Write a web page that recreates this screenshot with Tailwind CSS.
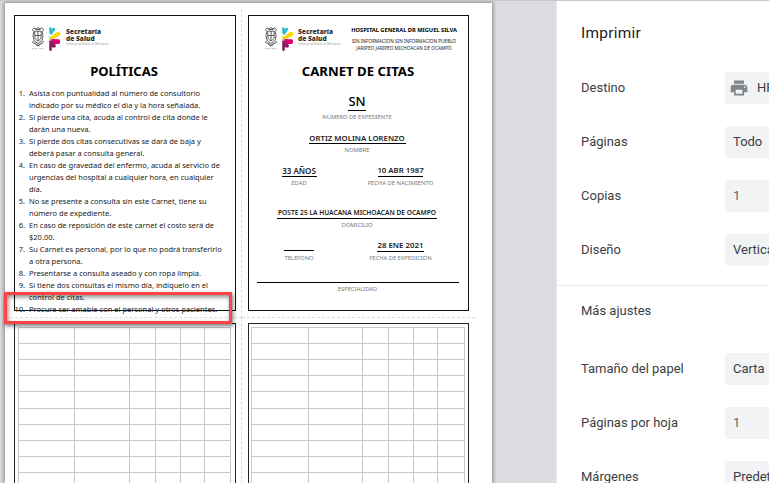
<!DOCTYPE html>
<html lang="es">
<head>
<meta charset="utf-8">
<title>Imprimir</title>
<script src="https://cdn.jsdelivr.net/npm/@tailwindcss/browser@4"></script>
</head>
<body class="w-[769px] h-[483px] overflow-hidden bg-[#dadce0] font-['Noto_Sans','Open_Sans',sans-serif]">
<svg class="hidden">
  <symbol id="logo" viewBox="0 0 30 28">
    <g fill="none" stroke="#4a4a4a" stroke-width=".9">
      <path d="M1.500 3.500 3 1.800 5 3l2-1.500L9 3l2-1.200 1.500 1.700-1.300 2 .8 4-1 5-4 3-4-3-1-5 .8-4z"/>
      <path d="M3.800 5.200h6.400v5.500c0 2-1.500 3.300-3.200 4.200-1.700-.9-3.200-2.200-3.200-4.200zM7 5.200v9.300M4 9.500h6"/>
      <path d="M2 15c-1 2 1 3 2 2l3 2.500 3-2.500c1 1 3 0 2-2M4.500 18.500 7 20l2.500-1.500M4.500 3.500h5"/>
    </g>
    <path d="M1 22.700h5M7.500 22.700h5" stroke="#aaa" stroke-width=".9" stroke-dasharray="1 .4"/>
    <path d="M18.200 2C18.300.6 20 .6 20.300 1.800L20.700 3 22 2c1.300-.6 2.500.5 1.900 1.900L20.500 9 18.200 7z" fill="#2fbcc6"/>
    <path d="M19.500 11 25.500 6.200c1.300-.9 2.900-.6 3.500.6.700 1.300.2 2.600-1 3.200L22 13z" fill="#fcd900"/>
    <path d="M18.200 9.500 21.500 12.700 18.200 15z" fill="#c5d93a"/>
    <path d="M20 13 27.500 13.300c2.200.4 2.200 4.400-.2 4.700L23 18z" fill="#e0006f"/>
    <path d="M18.200 15 20.500 14 24.700 19c.9 1.700-1 3.300-2.500 2.500L21 21l-.3 3c-.4 1.700-2.300 1.500-2.500-.2z" fill="#8c1d63"/>
  </symbol>
</svg>
<div class="flex w-[769px] h-[483px] overflow-hidden border-t border-[#c8c8c8]">
  <main class="w-[556px] shrink-0 h-[482px] overflow-hidden pl-[5px] pt-[2px]">
    <div class="relative w-[487px] h-[480px] bg-white shadow-[0_0_4px_1px_#85858a]">
      <div class="grid grid-cols-[237px_233px] grid-rows-[309px_171px] pt-[6px] h-[480px] overflow-hidden">

        <section class="border-r border-b border-dashed border-[#dcdcdc] pl-[9px] pt-[6px]">
          <div class="w-[222px] h-[296px] border border-[#111]">
            <div class="flex h-[44px] pt-[10px] pl-[16px]">
              <svg class="w-[30px] h-[28px]"><use href="#logo"/></svg>
              <div class="ml-[5px] mt-[3px] text-[#333] whitespace-nowrap">
                <div class="text-[6.600px] leading-[6.500px] font-black font-['Open_Sans']">Secretaría<br>de Salud</div>
                <div class="text-[2.600px] leading-[5px] text-[#999]">Gobierno del Estado de Michoacán</div>
              </div>
            </div>
            <h1 class="h-[27px] leading-[23px] text-center text-[13px] font-bold text-black pr-[2px]">POLÍTICAS</h1>
            <ol class="text-[7.520px] leading-[12px] text-[#222] whitespace-nowrap [&>li]:flex [&>li>b]:w-[10px] [&>li>b]:mr-[4px] [&>li>b]:font-normal [&>li>b]:flex [&>li>b]:justify-end">
              <li><b>1.</b><p>Asista con puntualidad al número de consultorio<br>indicado por su médico el día y la hora señalada.</p></li>
              <li><b>2.</b><p>Si pierde una cita, acuda al control de cita donde le<br>darán una nueva.</p></li>
              <li><b>3.</b><p>Si pierde dos citas consecutivas se dará de baja y<br>deberá pasar a consulta general.</p></li>
              <li><b>4.</b><p>En caso de gravedad del enfermo, acuda al servicio de<br>urgencias del hospital a cualquier hora, en cualquier<br>día.</p></li>
              <li><b>5.</b><p>No se presente a consulta sin este Carnet, tiene su<br>número de expediente.</p></li>
              <li><b>6.</b><p>En caso de reposición de este carnet el costo será de<br>$20.00.</p></li>
              <li><b>7.</b><p>Su Carnet es personal, por lo que no podrá transferirlo<br>a otra persona.</p></li>
              <li><b>8.</b><p>Presentarse a consulta aseado y con ropa limpia.</p></li>
              <li><b>9.</b><p>Si tiene dos consultas el mismo día, indíquelo en el<br>control de citas.</p></li>
              <li><b>10.</b><p>Procure ser amable con el personal y otros pacientes.</p></li>
            </ol>
          </div>
        </section>

        <section class="border-b border-dashed border-[#dcdcdc] pl-[6px] pt-[6px]">
          <div class="w-[221px] h-[296px] border border-[#111] text-center whitespace-nowrap text-[#222]">
            <div class="flex h-[44px] pt-[10px] pl-[15px]">
              <svg class="w-[30px] h-[28px]"><use href="#logo"/></svg>
              <div class="ml-[4px] mt-[3px] w-[43px] text-left text-[#333]">
                <div class="text-[6.600px] leading-[6.500px] font-black font-['Open_Sans']">Secretaría<br>de Salud</div>
                <div class="text-[2.600px] leading-[5px] text-[#999]">Gobierno del Estado de Michoacán</div>
              </div>
              <div class="w-[126px]">
                <div class="text-[5.700px] leading-[8px] font-bold text-black">HOSPITAL GENERAL DR MIGUEL SILVA</div>
                <div class="mt-[4px] text-[4.700px] leading-[7px]">SIN INFORMACION SIN INFORMACION PUEBLO<br>JARIPEO JARIPEO MICHOACAN DE OCAMPO</div>
              </div>
            </div>
            <h1 class="h-[31px] leading-[23px] text-[13.200px] font-bold text-black pr-[1px]">CARNET DE CITAS</h1>
            <div class="pr-[3px] flex flex-col items-center">
              <div class="w-[18px] h-[20px] border-b border-black flex justify-center text-[13px] leading-[20px] font-medium text-black">SN</div>
              <div class="h-[20px] text-[5.800px] leading-[13px] text-[#777]">NÚMERO DE EXPEDIENTE</div>
              <div class="w-[97px] h-[13px] border-b border-black flex justify-center text-[7.800px] leading-[15px] font-semibold">ORTIZ MOLINA LORENZO</div>
              <div class="h-[20px] text-[5.800px] leading-[12px] text-[#777]">NOMBRE</div>
            </div>
            <div class="grid grid-cols-[100px_103px]">
              <div class="flex flex-col items-center">
                <div class="w-[35px] h-[13px] border-b border-black flex justify-center text-[8px] leading-[13px] font-semibold">33 AÑOS</div>
                <div class="h-[29px] text-[5.800px] leading-[12px] text-[#777]">EDAD</div>
              </div>
              <div class="flex flex-col items-center">
                <div class="w-[45px] h-[13px] border-b border-black flex justify-center text-[7.800px] leading-[13px] font-semibold">10 ABR 1987</div>
                <div class="h-[29px] text-[5.900px] leading-[12px] text-[#777]">FECHA DE NACIMIENTO</div>
              </div>
            </div>
            <div class="pr-[3px] flex flex-col items-center">
              <div class="w-[160px] h-[13px] border-b border-black flex justify-center text-[6.640px] leading-[14px] font-semibold">POSTE 25 LA HUACANA MICHOACAN DE OCAMPO</div>
              <div class="h-[20px] text-[5.800px] leading-[12px] text-[#777]">DOMICILIO</div>
            </div>
            <div class="grid grid-cols-[100px_103px]">
              <div class="flex flex-col items-center">
                <div class="w-[30px] h-[12px] border-b border-black"></div>
                <div class="text-[5.800px] leading-[14px] text-[#777]">TELÉFONO</div>
              </div>
              <div class="flex flex-col items-center">
                <div class="w-[47px] h-[13px] border-b border-black flex justify-center text-[7.900px] leading-[13px] font-semibold">28 ENE 2021</div>
                <div class="h-[18px] text-[5.800px] leading-[12px] text-[#777]">FECHA DE EXPEDICIÓN</div>
              </div>
            </div>
            <div class="pr-[1px] flex flex-col items-center">
              <div class="w-[202px] h-[13px] border-b border-black"></div>
              <div class="pr-px text-[5.800px] leading-[13px] text-[#777]">ESPECIALIDAD</div>
            </div>
          </div>
        </section>

        <section class="border-r border-dashed border-[#dcdcdc] pl-[9px] pt-[5px] overflow-hidden">
          <div class="w-[222px] h-[166px] overflow-hidden border border-b-0 border-[#222] pl-[3px] pt-[3px]">
            <div id="left-table" class="grid grid-cols-[56px_55px_26px_25px_24px_26px] w-[213px] border-l border-t border-[#c8c8c8]"></div>
          </div>
        </section>
        <section class="pl-[6px] pt-[5px] overflow-hidden">
          <div class="w-[221px] h-[166px] overflow-hidden border border-b-0 border-[#222] pl-[2px] pt-[3px]">
            <div id="right-table" class="grid grid-cols-[57px_54px_26px_25px_24px_27px] w-[214px] border-l border-t border-[#c8c8c8]"></div>
          </div>
        </section>
      </div>
      <div class="absolute left-[-1px] top-[289px] w-[228px] h-[32px] border-[3px] border-[#fb4444] shadow-[1px_2px_4px_#0008,inset_1px_2px_4px_#0007]"></div>
    </div>
  </main>

  <aside class="w-[213px] shrink-0 h-[482px] bg-white border-l border-[#e8eaed] overflow-hidden font-[Roboto] text-[13px] text-[#3c4043] whitespace-nowrap">
    <div class="h-[71px] pl-[24px] leading-[64px] text-[15.400px] text-[#202124] tracking-[0.3px]">Imprimir</div>
    <div class="flex flex-col gap-[22px] pl-[24px] h-[213px]">
      <div class="flex h-[32px] items-center"><span class="w-[144px] shrink-0">Destino</span><div class="flex items-center w-[150px] shrink-0 h-[32px] rounded-[4px] bg-[#f1f3f4] pl-[4px]"><svg class="w-[20px] h-[20px] mr-[8px]" viewBox="0 0 24 24" fill="#80868b"><path d="M19 8H5c-1.660 0-3 1.340-3 3v6h4v4h12v-4h4v-6c0-1.660-1.340-3-3-3zm-3 11H8v-5h8v5zm3-7c-.55 0-1-.45-1-1s.45-1 1-1 1 .45 1 1-.45 1-1 1zm-1-9H6v4h12V3z"/></svg>HP</div></div>
      <div class="flex h-[32px] items-center"><span class="w-[144px] shrink-0">Páginas</span><div class="w-[150px] shrink-0 leading-[32px] rounded-[4px] bg-[#f1f3f4] pl-[8px]">Todo</div></div>
      <div class="flex h-[32px] items-center"><span class="w-[144px] shrink-0">Copias</span><div class="w-[150px] shrink-0 leading-[32px] rounded-[4px] bg-[#f1f3f4] pl-[8px] text-[#5f6368]">1</div></div>
      <div class="flex h-[32px] items-center"><span class="w-[144px] shrink-0">Diseño</span><div class="w-[150px] shrink-0 leading-[32px] rounded-[4px] bg-[#f1f3f4] pl-[8px]">Vertical</div></div>
    </div>
    <div class="border-t border-[#e8eaed] h-[68px] pl-[24px] leading-[50px]">Más ajustes</div>
    <div class="flex flex-col gap-[22px] pl-[24px]">
      <div class="flex h-[32px] items-center"><span class="w-[144px] shrink-0">Tamaño del papel</span><div class="w-[150px] shrink-0 leading-[32px] rounded-[4px] bg-[#f1f3f4] pl-[8px]">Carta</div></div>
      <div class="flex h-[32px] items-center"><span class="w-[144px] shrink-0">Páginas por hoja</span><div class="w-[150px] shrink-0 leading-[32px] rounded-[4px] bg-[#f1f3f4] pl-[8px] text-[#5f6368]">1</div></div>
      <div class="flex h-[32px] items-center"><span class="w-[144px] shrink-0">Márgenes</span><div class="w-[150px] shrink-0 leading-[32px] rounded-[4px] bg-[#f1f3f4] pl-[8px]">Predeterminado</div></div>
    </div>
  </aside>
</div>
<template id="cell"><div class="border-r border-b border-[#c8c8c8] h-[16px]"></div></template>
<template id="tall-cell"><div class="border-r border-b border-[#c8c8c8] h-[17px]"></div></template>
<script>
for (const id of ['left-table', 'right-table'])
  for (let i = 0; i < 66; i++)
    document.getElementById(id).append(document.getElementById(Math.floor(i / 6) === 4 ? 'tall-cell' : 'cell').content.cloneNode(true));
</script>
</body>
</html>
